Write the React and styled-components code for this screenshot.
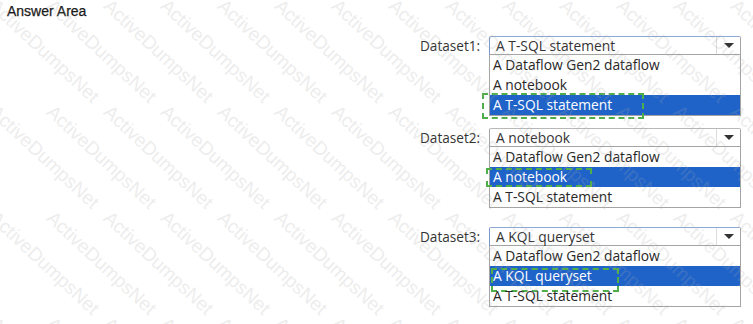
import React from 'react';
import styled, { createGlobalStyle } from 'styled-components';

const GlobalStyle = createGlobalStyle`
  html, body {
    margin: 0;
    background: #ffffff;
  }
  body {
    font-family: "Open Sans", "Noto Sans", sans-serif;
  }
`;

const datasets = [
  { name: 'Dataset1', value: 'A T-SQL statement', selected: 2, gap: 14, mark: { l: -8, r: 96, t: -2, b: -4 } },
  { name: 'Dataset2', value: 'A notebook', selected: 1, gap: 12, mark: { l: -4, r: 148, t: 1, b: 0 } },
  { name: 'Dataset3', value: 'A KQL queryset', selected: 1, gap: 19, mark: { l: 1, r: 121, t: 2, b: -6 } },
];

const options = [
  ['A Dataflow Gen2 dataflow', 'A notebook', 'A T-SQL statement'],
  ['A Dataflow Gen2 dataflow', 'A notebook', 'A T-SQL statement'],
  ['A Dataflow Gen2 dataflow', 'A KQL queryset', 'A T-SQL statement'],
];

const App = () => {
  const marks = [];
  for (let r = 0; r < 4; r++) {
    for (let c = 0; c < 15; c++) marks.push(`${r}-${c}`);
  }

  return (
    <Page>
      <GlobalStyle />
      <Title>Answer Area</Title>
      <Form>
        {datasets.map((d, i) => (
          <Row key={d.name} $gap={d.gap}>
            <Label>{d.name}:</Label>
            <Dropdown>
              <SelectBox $focus={i !== 1}>
                <Value>{d.value}</Value>
                <ArrowCell>
                  <Arrow />
                </ArrowCell>
              </SelectBox>
              <List>
                {options[i].map((o, j) => (
                  <Option key={o} $active={j === d.selected}>
                    {o}
                    {j === d.selected && (
                      <Marker $l={d.mark.l} $r={d.mark.r} $t={d.mark.t} $b={d.mark.b} />
                    )}
                  </Option>
                ))}
              </List>
            </Dropdown>
          </Row>
        ))}
      </Form>
      <Watermark aria-hidden="true">
        {marks.map((k) => (
          <Cell key={k}>
            <Stamp>ActiveDumpsNet</Stamp>
          </Cell>
        ))}
      </Watermark>
    </Page>
  );
};

const Page = styled.div`
  position: relative;
  width: 753px;
  height: 324px;
  overflow: hidden;
  background: #fff;
`;

const Title = styled.div`
  height: 22px;
  padding-left: 7px;
  font-family: "Liberation Sans", Arial, sans-serif;
  font-size: 14px;
  line-height: 22px;
  color: #1a1a1a;
  -webkit-text-stroke: 0.25px #1a1a1a;
`;

const Form = styled.div`
  display: flex;
  flex-direction: column;
  margin-left: 420px;
`;

const Row = styled.div`
  display: flex;
  align-items: flex-start;
  margin-top: ${(p) => p.$gap}px;
`;

const Label = styled.div`
  width: 69px;
  height: 19px;
  font-size: 13.6px;
  line-height: 19px;
  color: #333;
`;

const Dropdown = styled.div`
  width: 252px;
  display: flex;
  flex-direction: column;
`;

const SelectBox = styled.div`
  height: 19px;
  box-sizing: border-box;
  display: flex;
  border: 1px solid #a4a4a4;
  border-top-color: ${(p) => (p.$focus ? '#8fa9d6' : '#b8b8b8')};
  border-left-color: ${(p) => (p.$focus ? '#7b98cc' : '#a4a4a4')};
  border-radius: 2px 2px 0 0;
  background: #fff;
`;

const Value = styled.div`
  flex: 1;
  padding-left: 6px;
  font-size: 13.8px;
  line-height: 18px;
  color: #333;
  white-space: nowrap;
`;

const ArrowCell = styled.div`
  width: 23px;
  border-left: 1px solid #dcdcdc;
  display: flex;
  align-items: center;
  justify-content: center;
`;

const Arrow = styled.div`
  width: 0;
  height: 0;
  border-left: 5px solid transparent;
  border-right: 5px solid transparent;
  border-top: 5px solid #333;
  margin-top: -1px;
`;

const List = styled.div`
  border: 1px solid #a4a4a4;
  border-top: none;
  background: #fff;
`;

const Option = styled.div`
  position: relative;
  height: 20px;
  padding-left: 3px;
  font-size: 13.8px;
  line-height: 20px;
  white-space: nowrap;
  color: ${(p) => (p.$active ? '#ffffff' : '#262626')};
  background: ${(p) => (p.$active ? '#1f63c9' : 'transparent')};
`;

const Marker = styled.div`
  position: absolute;
  left: ${(p) => p.$l}px;
  right: ${(p) => p.$r}px;
  top: ${(p) => p.$t}px;
  bottom: ${(p) => p.$b}px;
  border: 2px dashed #4fae4a;
  pointer-events: none;
`;

const Watermark = styled.div`
  position: absolute;
  top: -5px;
  left: 0;
  display: grid;
  grid-template-columns: repeat(15, 57px);
  grid-auto-rows: 106px;
  pointer-events: none;
  opacity: 0.2;
`;

const Cell = styled.div`
  position: relative;
`;

const Stamp = styled.span`
  display: block;
  transform: rotate(43deg);
  transform-origin: 0 0;
  font-family: "Liberation Sans", Arial, sans-serif;
  font-size: 19px;
  color: #a8a8a8;
  white-space: nowrap;
`;

export default App;
